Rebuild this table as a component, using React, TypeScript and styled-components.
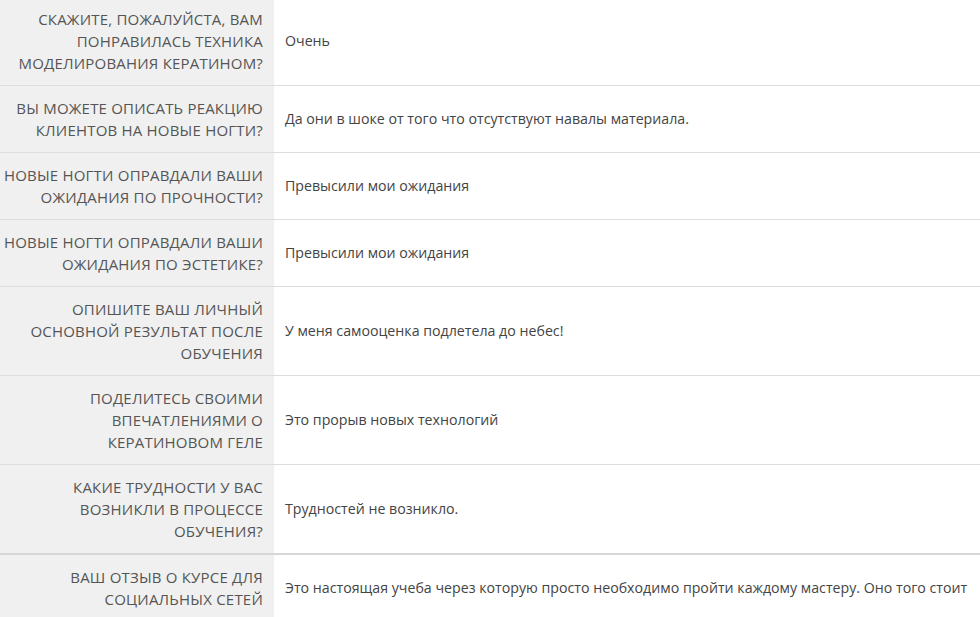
import React from 'react';
import styled, { createGlobalStyle } from 'styled-components';

const GlobalStyle = createGlobalStyle`
    body {
        margin: 0;
        background: #ffffff;
        font-family: 'Open Sans', 'Liberation Sans', sans-serif;
        overflow: hidden;
    }
`;

const Table = styled.div`
    width: 980px;
    margin-top: -3px;
    display: flex;
    flex-direction: column;
`;

const Row = styled.div<{ $heavy?: boolean }>`
    display: grid;
    grid-template-columns: 274px 1fr;
    border-top: ${(p) => (p.$heavy ? '2px solid #d6d6d6' : '1px solid #dddddd')};
    &:first-child {
        border-top: none;
    }
`;

const Question = styled.div`
    background: #f0f0f0;
    padding: 11px 11px 11px 2px;
    text-align: right;
    text-transform: uppercase;
    font-size: 15px;
    line-height: 22px;
    color: #555555;
    letter-spacing: 0.2px;
`;

const Answer = styled.div`
    display: flex;
    align-items: center;
    padding: 11px 11px;
    font-size: 14.2px;
    line-height: 22px;
    color: #444444;
    white-space: nowrap;
    overflow: hidden;
`;

const rows = [
    { q: 'Скажите, пожалуйста, вам понравилась техника моделирования кератином?', a: 'Очень' },
    { q: 'Вы можете описать реакцию клиентов на новые ногти?', a: 'Да они в шоке от того что отсутствуют навалы материала.' },
    { q: 'Новые ногти оправдали ваши ожидания по прочности?', a: 'Превысили мои ожидания' },
    { q: 'Новые ногти оправдали ваши ожидания по эстетике?', a: 'Превысили мои ожидания' },
    { q: 'Опишите ваш личный основной результат после обучения', a: 'У меня самооценка подлетела до небес!' },
    { q: 'Поделитесь своими впечатлениями о кератиновом геле', a: 'Это прорыв новых технологий' },
    { q: 'Какие трудности у вас возникли в процессе обучения?', a: 'Трудностей не возникло.' },
    { q: 'Ваш отзыв о курсе для социальных сетей', a: 'Это настоящая учеба через которую просто необходимо пройти каждому мастеру. Оно того стоит', heavy: true },
];

export default function App() {
    return (
        <React.Fragment>
            <GlobalStyle />
            <Table>
                {rows.map((r, i) => (
                    <Row key={i} $heavy={r.heavy}>
                        <Question>{r.q}</Question>
                        <Answer>{r.a}</Answer>
                    </Row>
                ))}
            </Table>
        </React.Fragment>
    );
}
